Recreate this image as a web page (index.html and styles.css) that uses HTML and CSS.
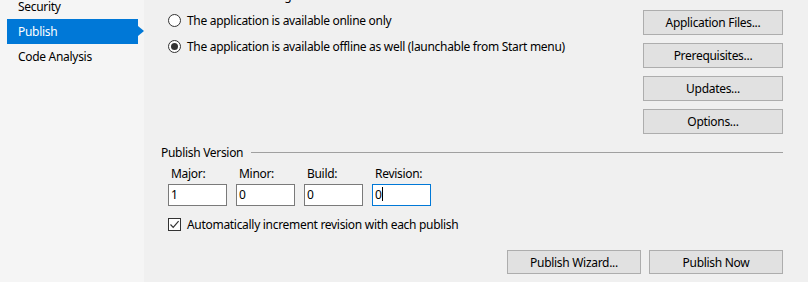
FILE: index.html
```html
<!DOCTYPE html>
<html lang="en">
<head>
  <meta charset="UTF-8">
  <title>Publish</title>
  <link rel="stylesheet" href="styles.css">
</head>
<body>
  <div class="sidebar">
    <div class="nav-item nav-top">Security</div>
    <div class="nav-item selected">Publish</div>
    <div class="nav-item">Code Analysis</div>
  </div>

  <div class="main">
    <div class="group-title cut">Install Mode and Settings</div>

    <div class="top">
      <div class="radios">
        <div class="radio-row">
          <span class="radio"></span>
          <span>The application is available online only</span>
        </div>
        <div class="radio-row">
          <span class="radio checked"></span>
          <span>The application is available offline as well (launchable from Start menu)</span>
        </div>
      </div>
      <div class="side-buttons">
        <button class="btn">Application Files...</button>
        <button class="btn">Prerequisites...</button>
        <button class="btn">Updates...</button>
        <button class="btn">Options...</button>
      </div>
    </div>

    <div class="group-title">
      <span>Publish Version</span>
      <span class="rule"></span>
    </div>

    <div class="version">
      <div class="field">
        <label>Major:</label>
        <div class="textbox">1</div>
      </div>
      <div class="field">
        <label>Minor:</label>
        <div class="textbox">0</div>
      </div>
      <div class="field">
        <label>Build:</label>
        <div class="textbox">0</div>
      </div>
      <div class="field">
        <label>Revision:</label>
        <div class="textbox focused">0<span class="caret"></span></div>
      </div>
    </div>

    <div class="check-row">
      <span class="checkbox">
        <svg width="11" height="11" viewBox="0 0 11 11"><path d="M1.5 5.5 L4.2 8.3 L9.6 2.2" fill="none" stroke="#333" stroke-width="1.2"/></svg>
      </span>
      <span>Automatically increment revision with each publish</span>
    </div>

    <div class="bottom-buttons">
      <button class="btn wide">Publish Wizard...</button>
      <button class="btn wide">Publish Now</button>
    </div>
  </div>
</body>
</html>
```

FILE: styles.css
```css
body {
  margin: 0;
  display: flex;
  height: 282px;
  overflow: hidden;
  font-family: 'Noto Sans', 'Open Sans', sans-serif;
  font-size: 12px;
  letter-spacing: -0.3px;
  color: #000;
  background-color: #f0f0f0;
}
.sidebar {
  width: 144px;
  background-color: #f5f5f5;
  padding-left: 7px;
  box-sizing: border-box;
}
.nav-item {
  height: 25px;
  line-height: 25px;
  padding-left: 11px;
  width: 131px;
  box-sizing: border-box;
  position: relative;
}
.nav-top {
  margin-top: -6px;
}
.nav-item.selected {
  background-color: #0078d7;
  color: #fff;
}
.nav-item.selected::after {
  content: '';
  position: absolute;
  right: -6px;
  top: 7px;
  border-left: 6px solid #0078d7;
  border-top: 5px solid transparent;
  border-bottom: 5px solid transparent;
}
.main {
  flex: 1;
  padding: 0 25px 0 17px;
}
.group-title {
  display: flex;
  align-items: center;
  gap: 8px;
  height: 14px;
}
.group-title.cut {
  margin-top: -12px;
}
.rule {
  flex: 1;
  border-top: 1px solid #a0a0a0;
  margin-top: 1px;
}
.top {
  display: flex;
  justify-content: space-between;
  margin-top: 4px;
}
.radios {
  padding-left: 7px;
  padding-top: 6px;
}
.radio-row {
  display: flex;
  align-items: center;
  gap: 6px;
  height: 16px;
  margin-bottom: 10px;
}
.radio {
  width: 11px;
  height: 11px;
  border: 1px solid #333;
  border-radius: 50%;
  background: #fff;
  position: relative;
}
.radio.checked::after {
  content: '';
  position: absolute;
  left: 2px;
  top: 2px;
  width: 7px;
  height: 7px;
  border-radius: 50%;
  background: #333;
}
.side-buttons {
  display: flex;
  flex-direction: column;
  gap: 8px;
  margin-top: 4px;
}
.btn {
  width: 140px;
  height: 25px;
  border: 1px solid #adadad;
  background-color: #e1e1e1;
  font-family: inherit;
  font-size: 12px;
  letter-spacing: -0.3px;
  color: #000;
  padding: 0;
}
.top + .group-title {
  margin-top: 11px;
}
.version {
  display: flex;
  gap: 9px;
  padding-left: 7px;
  margin-top: 7px;
}
.field label {
  display: block;
  padding-left: 3px;
  height: 16px;
  line-height: 16px;
  margin-bottom: 2px;
}
.textbox {
  width: 59px;
  height: 22px;
  box-sizing: border-box;
  border: 1px solid #7a7a7a;
  background: #fff;
  padding-left: 2px;
  line-height: 20px;
}
.textbox.focused {
  border-color: #0078d7;
}
.caret {
  display: inline-block;
  width: 1px;
  height: 14px;
  background: #000;
  vertical-align: -2px;
}
.check-row {
  display: flex;
  align-items: center;
  gap: 6px;
  padding-left: 7px;
  margin-top: 10px;
  height: 16px;
}
.checkbox {
  width: 11px;
  height: 11px;
  border: 1px solid #333;
  background: #fff;
  display: flex;
}
.bottom-buttons {
  display: flex;
  justify-content: flex-end;
  gap: 8px;
  margin-top: 18px;
}
.btn.wide {
  width: 134px;
  height: 24px;
}
```
